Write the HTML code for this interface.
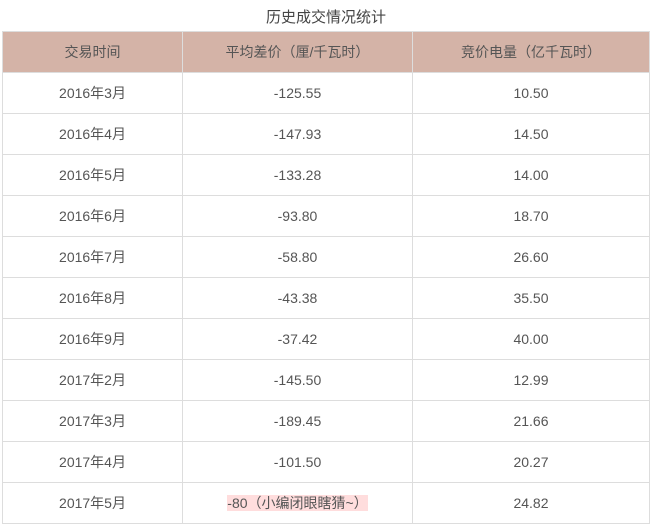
<!DOCTYPE html><html><head><meta charset="utf-8"><style>
body{margin:0;background:#fff;font-family:"Liberation Sans","Noto Sans CJK SC",sans-serif;color:#555;font-size:14px}
.t{position:absolute;top:6px;left:0;width:652px;text-align:center;font-size:15px;color:#444}
table{position:absolute;top:31px;left:2px;width:648px;border-collapse:collapse}
td,th{border:1px solid #ddd;text-align:center;height:40px;padding:0;font-weight:normal}
th{background:#d4b3a7;border-color:#ddd;color:#555}
col.a{width:180px}col.b{width:230px}
.h{background:#fdd}
</style></head><body>
<div class="t">历史成交情况统计</div>
<table><colgroup><col class="a"><col class="b"><col></colgroup>
<tr><th>交易时间</th><th>平均差价（厘/千瓦时）</th><th>竞价电量（亿千瓦时）</th></tr>
<tr><td>2016年3月</td><td>-125.55</td><td>10.50</td></tr>
<tr><td>2016年4月</td><td>-147.93</td><td>14.50</td></tr>
<tr><td>2016年5月</td><td>-133.28</td><td>14.00</td></tr>
<tr><td>2016年6月</td><td>-93.80</td><td>18.70</td></tr>
<tr><td>2016年7月</td><td>-58.80</td><td>26.60</td></tr>
<tr><td>2016年8月</td><td>-43.38</td><td>35.50</td></tr>
<tr><td>2016年9月</td><td>-37.42</td><td>40.00</td></tr>
<tr><td>2017年2月</td><td>-145.50</td><td>12.99</td></tr>
<tr><td>2017年3月</td><td>-189.45</td><td>21.66</td></tr>
<tr><td>2017年4月</td><td>-101.50</td><td>20.27</td></tr>
<tr><td>2017年5月</td><td><span class="h">-80（小编闭眼瞎猜~）</span></td><td>24.82</td></tr>
</table></body></html>
